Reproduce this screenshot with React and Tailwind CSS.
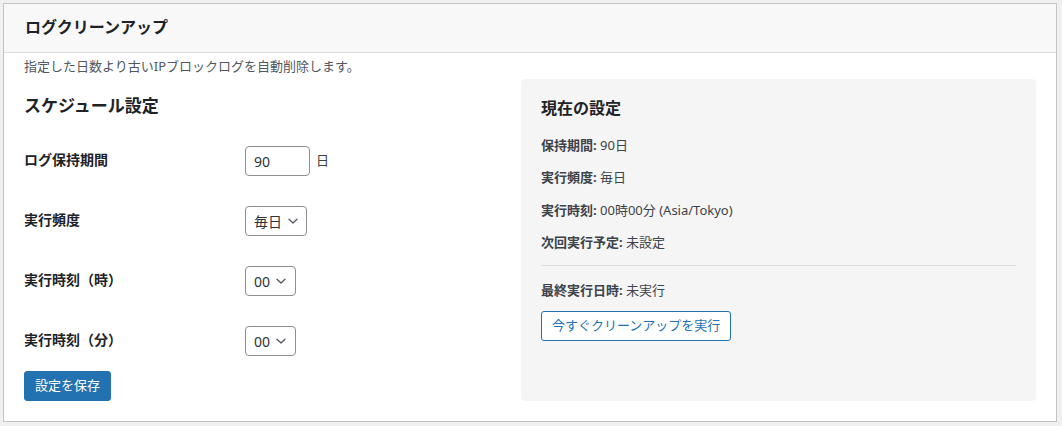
import React from "react";

const font = { fontFamily: '"Noto Sans", "Noto Sans CJK JP", sans-serif' };

function Chevron() {
  return (
    <svg width="12" height="12" viewBox="0 0 12 12" className="ml-[5px]" fill="none">
      <path d="M2 4.2 L6 8 L10 4.2" stroke="#50575e" strokeWidth="1.3" strokeLinecap="round" strokeLinejoin="round" />
    </svg>
  );
}

function Select({ value, w }) {
  return (
    <div className={`flex items-center h-[30px] ${w} pl-[8px] border border-[#8c8f94] rounded-[4px] bg-white text-[14px] text-[#2c3338]`}>
      <span>{value}</span>
      <Chevron />
    </div>
  );
}

function Row({ label, children }) {
  return (
    <div className="flex items-center h-[60px]">
      <div className="w-[221px] text-[14px] font-bold text-[#1d2327] -mt-[4px]">{label}</div>
      <div className="flex items-center">{children}</div>
    </div>
  );
}

function Info({ k, v }) {
  return (
    <div className="text-[13px] text-[#3c434a] leading-[20px] h-[32.3px]">
      <span className="font-bold">{k}:</span> {v}
    </div>
  );
}

export default function App() {
  return (
    <div className="w-[1062px] h-[426px] bg-[#f0f0f1] pt-[3px] pl-[3px]" style={font}>
      <div className="w-[1054px] h-[419px] bg-white border border-[#c3c4c7]">
        <div className="h-[49px] bg-[#f8f8f8] border-b border-[#dcdcde] flex items-center px-[21px]">
          <h1 className="text-[16px] font-bold text-[#1d2327] -mt-[2px]">ログクリーンアップ</h1>
        </div>
        <div className="px-[20px]">
          <p className="text-[13px] text-[#50575e] leading-[20px] pt-[3px]">
            指定した日数より古いIPブロックログを自動削除します。
          </p>
          <div className="flex mt-[3px] gap-[20px]">
            <div className="w-[477px]">
              <h2 className="text-[17px] font-bold text-[#1d2327] mt-[15px] leading-[24px]">スケジュール設定</h2>
              <div className="mt-[13px]">
                <Row label="ログ保持期間">
                  <div className="flex items-center h-[30px] w-[65px] pl-[8px] border border-[#8c8f94] rounded-[4px] bg-white text-[14px] text-[#2c3338]">90</div>
                  <span className="ml-[6px] text-[13px] text-[#3c434a]">日</span>
                </Row>
                <Row label="実行頻度">
                  <Select value="毎日" w="w-[62px]" />
                </Row>
                <Row label="実行時刻（時）">
                  <Select value="00" w="w-[51px]" />
                </Row>
                <Row label="実行時刻（分）">
                  <Select value="00" w="w-[51px]" />
                </Row>
              </div>
              <button className="h-[30px] px-[10px] bg-[#2271b1] text-white text-[13px] rounded-[3px] border border-[#2271b1]">
                設定を保存
              </button>
            </div>
            <div className="flex-1 h-[322px] bg-[#f5f5f5] rounded-[4px] px-[20px] pt-[18px]">
              <h3 className="text-[16px] font-bold text-[#1d2327] leading-[22px]">現在の設定</h3>
              <div className="mt-[16px]">
                <Info k="保持期間" v="90日" />
                <Info k="実行頻度" v="毎日" />
                <Info k="実行時刻" v="00時00分 (Asia/Tokyo)" />
                <Info k="次回実行予定" v="未設定" />
              </div>
              <div className="border-t border-[#dcdcde] mt-[1px]" />
              <div className="mt-[14px]">
                <Info k="最終実行日時" v="未実行" />
              </div>
              <button className="mt-[-11px] h-[30px] px-[10px] bg-white text-[#2271b1] text-[13px] rounded-[3px] border border-[#2271b1]">
                今すぐクリーンアップを実行
              </button>
            </div>
          </div>
        </div>
      </div>
    </div>
  );
}
